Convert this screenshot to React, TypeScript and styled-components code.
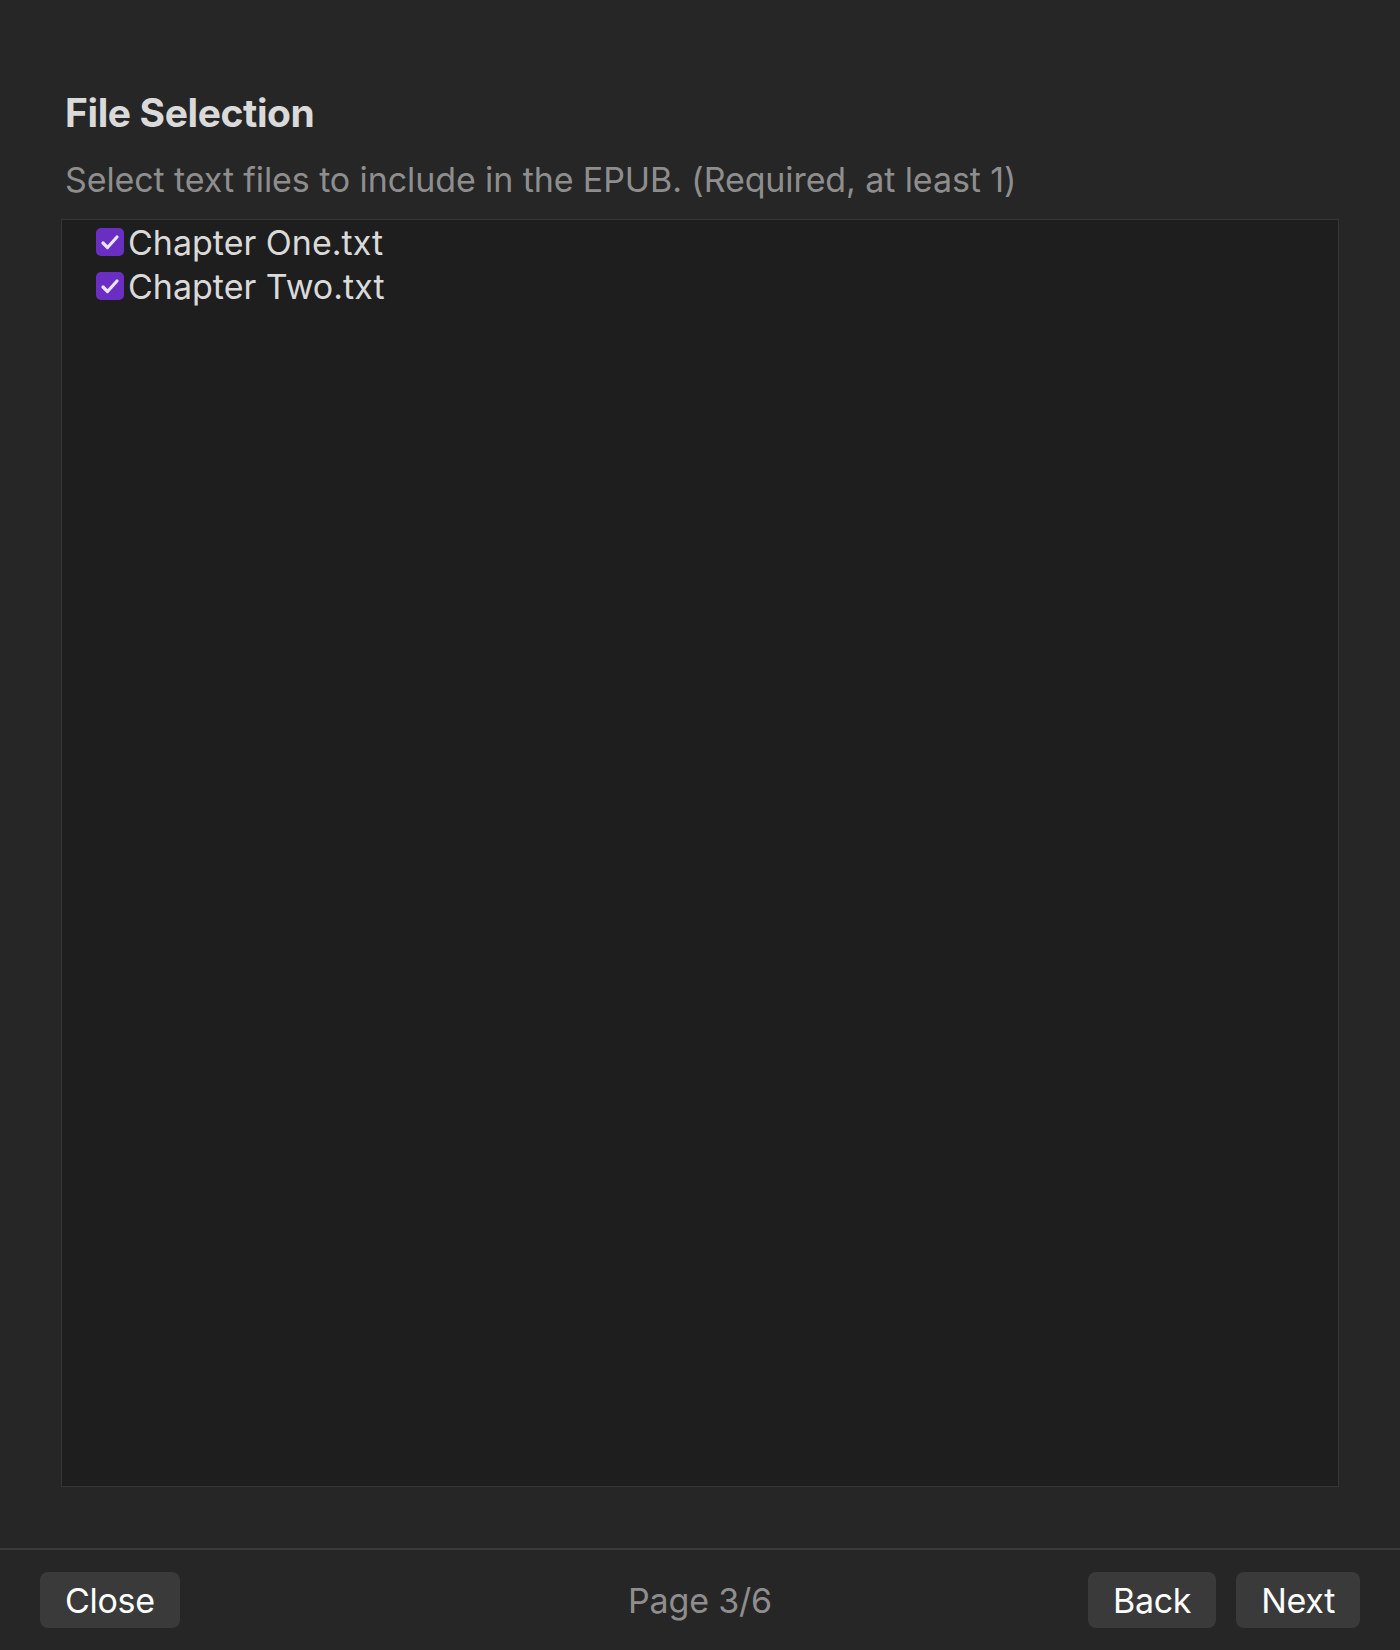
import styled, { createGlobalStyle } from "styled-components";

const GlobalStyle = createGlobalStyle`
  html, body {
    margin: 0;
    padding: 0;
    background: #262626;
  }
  * {
    box-sizing: border-box;
  }
`;

const Page = styled.div`
  height: 100vh;
  display: flex;
  flex-direction: column;
  background: #262626;
  font-family: Inter, "Noto Sans", "Liberation Sans", sans-serif;
`;
const Content = styled.main`
  flex: 1;
  display: flex;
  flex-direction: column;
  padding: 88px 61px 61px;
  min-height: 0;
`;
const Title = styled.h1`
  margin: 0;
  padding-left: 4px;
  font-size: 39px;
  line-height: 50px;
  font-weight: 700;
  letter-spacing: -0.4px;
  color: #dadada;
`;
const Description = styled.p`
  margin: 20px 0 17px;
  padding-left: 4px;
  font-size: 34px;
  line-height: 44px;
  letter-spacing: -0.1px;
  color: #8e8e8e;
`;
const FileList = styled.ul`
  flex: 1;
  margin: 0;
  padding: 0 0 0 34px;
  list-style: none;
  background: #1e1e1e;
  border: 1px solid #363636;
`;
const FileItem = styled.li`
  display: flex;
  align-items: center;
  gap: 4px;
  height: 44px;
  font-size: 34px;
  color: #dadada;
`;
const CheckBox = styled.span<{ $checked: boolean }>`
  display: inline-flex;
  align-items: center;
  justify-content: center;
  width: 28px;
  height: 28px;
  flex-shrink: 0;
  border-radius: 5px;
  background: ${(props) => (props.$checked ? "#6a2fc2" : "transparent")};
  border: ${(props) => (props.$checked ? "none" : "2px solid #555")};
`;
const Footer = styled.footer`
  display: grid;
  grid-template-columns: 1fr auto 1fr;
  align-items: center;
  padding: 22px 40px;
  border-top: 2px solid #3a3a3a;
`;
const ButtonGroup = styled.div<{ $end?: boolean }>`
  display: flex;
  gap: 20px;
  justify-content: ${(props) => (props.$end ? "flex-end" : "flex-start")};
`;
const Button = styled.button`
  height: 56px;
  padding: 0 25px;
  border: none;
  border-radius: 8px;
  background: #3a3a3a;
  color: #ffffff;
  font-family: Inter, "Noto Sans", "Liberation Sans", sans-serif;
  font-size: 34px;
  letter-spacing: -0.3px;
  cursor: pointer;
`;
const PageLabel = styled.span`
  font-size: 34px;
  letter-spacing: -0.2px;
  color: #8e8e8e;
`;

const files = [
  { name: "Chapter One.txt", checked: true },
  { name: "Chapter Two.txt", checked: true },
];

function App() {
  return (
    <Page>
      <GlobalStyle />
      <Content>
        <Title>File Selection</Title>
        <Description>
          Select text files to include in the EPUB. (Required, at least 1)
        </Description>
        <FileList>
          {files.map((file) => (
            <FileItem key={file.name}>
              <CheckBox $checked={file.checked}>
                {file.checked && (
                  <svg width="28" height="28" viewBox="0 0 28 28">
                    <path
                      d="M7 15 L11.5 19.5 L21 9"
                      fill="none"
                      stroke="#e8e4f0"
                      strokeWidth="3.2"
                      strokeLinecap="round"
                      strokeLinejoin="round"
                    />
                  </svg>
                )}
              </CheckBox>
              <span>{file.name}</span>
            </FileItem>
          ))}
        </FileList>
      </Content>
      <Footer>
        <ButtonGroup>
          <Button>Close</Button>
        </ButtonGroup>
        <PageLabel>Page 3/6</PageLabel>
        <ButtonGroup $end>
          <Button>Back</Button>
          <Button>Next</Button>
        </ButtonGroup>
      </Footer>
    </Page>
  );
}

export default App;
